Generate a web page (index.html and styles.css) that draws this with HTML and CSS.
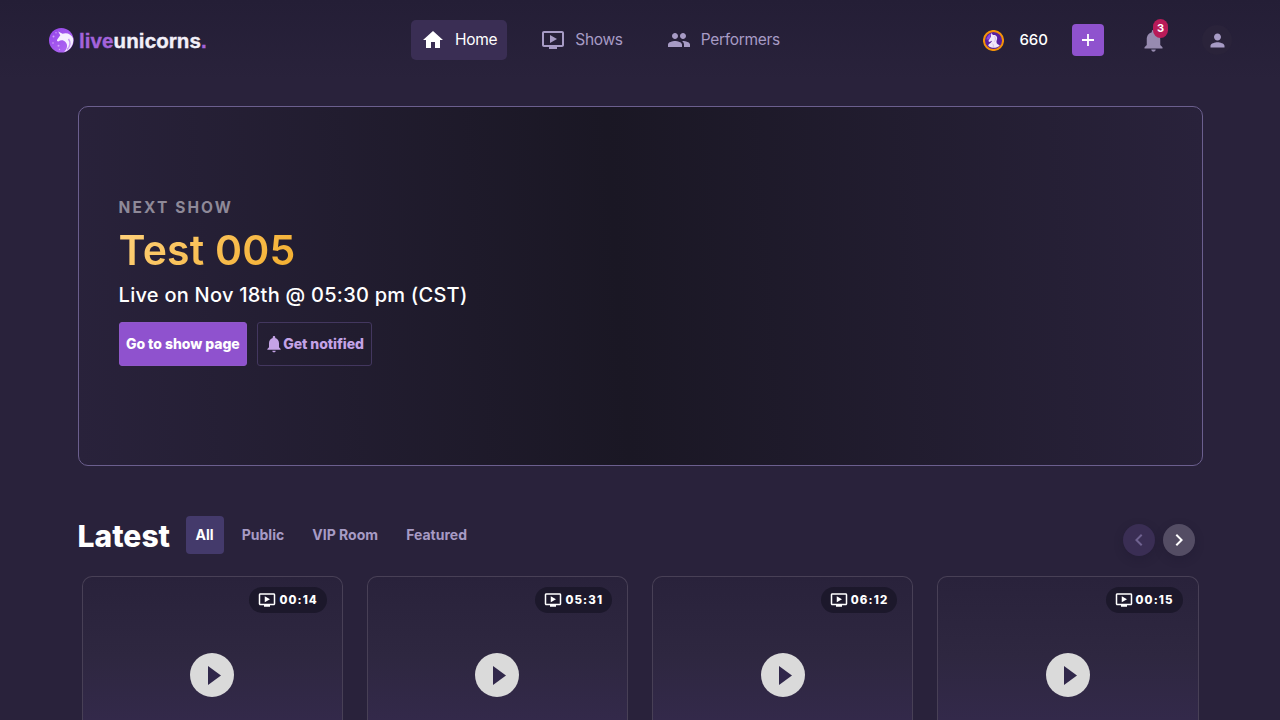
FILE: index.html
```html
<!DOCTYPE html>
<html lang="en">
<head>
<meta charset="utf-8">
<title>liveunicorns.</title>
<link rel="stylesheet" href="styles.css">
</head>
<body>
<svg class="defs" width="0" height="0" aria-hidden="true">
  <symbol id="tv" viewBox="0 0 24 24"><path d="M21 3H3c-1.11 0-2 .89-2 2v12c0 1.1.89 2 2 2h5v2h8v-2h5c1.1 0 2-.9 2-2V5c0-1.11-.9-2-2-2zm0 14H3V5h18v12zM9 7v8l7-4z"/></symbol>
  <symbol id="bell" viewBox="0 0 24 24"><path d="M12 22c1.1 0 2-.9 2-2h-4c0 1.1.9 2 2 2zm6-6v-5c0-3.070-1.640-5.640-4.500-6.320V4c0-.83-.67-1.500-1.500-1.500s-1.500.67-1.500 1.500v.680C7.630 5.360 6 7.920 6 11v5l-2 2v1h16v-1l-2-2z"/></symbol>
</svg>
<header class="header">
  <a class="logo">
    <svg class="logo-mark" viewBox="0 0 26 26">
      <defs><linearGradient id="lg" x1="0" y1="0" x2="1" y2="1"><stop offset="0" stop-color="#9344e8"/><stop offset="1" stop-color="#b46cf5"/></linearGradient></defs>
      <circle cx="13.300" cy="13.200" r="12.300" fill="url(#lg)"/>
      <path d="M10.200 4.500L14.500 6.800C19 5.200 23.500 7.500 25.200 11.500C26 17.500 22 23.500 16 25C19.500 21.500 20 18 17.500 15C15.300 12.800 13 12.700 10.300 14.500C9.200 14.500 8.700 13.700 9.100 12.800L12.300 8.300Z" fill="#f6efff"/>
      <path d="M20.500 12c2.500 3.500 1.500 7.500-1.500 10.500" fill="none" stroke="#c995f8" stroke-width="1.400"/>
      <g fill="#d2a2fa"><circle cx="5.500" cy="9.500" r="1"/><circle cx="5" cy="16" r=".8"/><circle cx="10.500" cy="18.700" r="1"/><circle cx="8" cy="5.800" r=".7"/><circle cx="11.500" cy="22.500" r=".7"/></g>
    </svg>
    <span class="logo-text"><span class="accent">live</span>unicorns<span class="accent">.</span></span>
  </a>
  <nav class="nav">
    <a class="nav-item active"><svg viewBox="0 0 24 24"><path d="M10 20v-6h4v6h5v-8h3L12 3 2 12h3v8z"/></svg><span>Home</span></a>
    <a class="nav-item"><svg><use href="#tv"/></svg><span>Shows</span></a>
    <a class="nav-item"><svg viewBox="0 0 24 24"><path d="M16 11c1.660 0 2.990-1.340 2.990-3S17.660 5 16 5s-3 1.340-3 3 1.340 3 3 3zm-8 0c1.660 0 2.990-1.340 2.990-3S9.660 5 8 5 5 6.340 5 8s1.340 3 3 3zm0 2c-2.330 0-7 1.170-7 3.500V19h14v-2.500c0-2.330-4.670-3.500-7-3.500zm8 0c-.29 0-.62.020-.97.050 1.160.84 1.970 1.970 1.970 3.450V19h6v-2.500c0-2.330-4.670-3.500-7-3.500z"/></svg><span>Performers</span></a>
  </nav>
  <div class="tools">
    <svg class="coin" viewBox="0 0 20 20"><circle cx="10" cy="10" r="9.100" fill="#57209f" stroke="#f49208" stroke-width="1.900"/><path d="M3.200 9Q4 4.500 8 3.300L6 9Z" fill="#8b48df"/><path d="M7.800 2.800l1.700 2C13 4.300 14.300 7 13 10c-.8 2 .5 4 3 4.500C13.500 17.500 8 18 5 15c.2-2 3.300-2.800 3.600-4.700l-2.600 1.200-.9-1 2.400-4z" fill="#f1e7fa"/><path d="M9 13c1.300 1 1 3 .2 4M11 6c1.500 2 .5 4 0 5" stroke="#c5afd9" fill="none" stroke-width=".7"/></svg>
    <span class="balance">660</span>
    <a class="plus"><svg viewBox="0 0 14 14"><path d="M7 1v12M1 7h12"/></svg></a>
    <a class="alerts"><svg><use href="#bell"/></svg><span class="badge">3</span></a>
    <a class="user"><svg viewBox="0 0 24 24"><path d="M12 12c2.210 0 4-1.790 4-4s-1.790-4-4-4-4 1.790-4 4 1.790 4 4 4zm0 2c-2.670 0-8 1.340-8 4v2h16v-2c0-2.660-5.330-4-8-4z"/></svg></a>
  </div>
</header>
<main>
  <section class="hero">
    <p class="eyebrow">NEXT SHOW</p>
    <h1>Test 005</h1>
    <p class="when">Live on Nov 18th @ 05:30 pm (CST)</p>
    <div class="actions">
      <a class="btn primary">Go to show page</a>
      <a class="btn outline"><svg><use href="#bell"/></svg>Get notified</a>
    </div>
  </section>
  <section class="latest">
    <div class="latest-head">
      <h2>Latest</h2>
      <div class="tabs"><a class="tab on">All</a><a class="tab">Public</a><a class="tab">VIP Room</a><a class="tab">Featured</a></div>
      <div class="arrows">
        <a class="arrow off"><svg viewBox="0 0 24 24"><path d="M15.410 7.410L14 6l-6 6 6 6 1.410-1.410L10.830 12z"/></svg></a>
        <a class="arrow"><svg viewBox="0 0 24 24"><path d="M10 6L8.590 7.410 13.170 12l-4.580 4.590L10 18l6-6z"/></svg></a>
      </div>
    </div>
    <div class="cards">
      <article class="card"><span class="time"><svg><use href="#tv"/></svg>00:14</span><span class="play"><svg viewBox="0 0 44 44"><path d="M18 13v19l13-9.500z"/></svg></span></article>
      <article class="card"><span class="time"><svg><use href="#tv"/></svg>05:31</span><span class="play"><svg viewBox="0 0 44 44"><path d="M18 13v19l13-9.500z"/></svg></span></article>
      <article class="card"><span class="time"><svg><use href="#tv"/></svg>06:12</span><span class="play"><svg viewBox="0 0 44 44"><path d="M18 13v19l13-9.500z"/></svg></span></article>
      <article class="card"><span class="time"><svg><use href="#tv"/></svg>00:15</span><span class="play"><svg viewBox="0 0 44 44"><path d="M18 13v19l13-9.500z"/></svg></span></article>
    </div>
  </section>
</main>
</body>
</html>
```
FILE: styles.css
```css
* { box-sizing: border-box; }
body { margin: 0; background: #29223b; color: #fff; font-family: Inter, "Liberation Sans", sans-serif; }
h1, h2, p { margin: 0; }
svg { display: block; fill: currentColor; flex: none; }
.defs { display: none; }
.header { height: 80px; padding: 0 48px 0 48px; display: grid; grid-template-columns: 363px 1fr auto; align-items: center; background: linear-gradient(#241e36, #29223b); }
.logo { display: flex; align-items: center; gap: 5px; }
.logo-mark { width: 26px; height: 26px; }
.logo-text { font: bold 20.500px/26px "Liberation Sans", sans-serif; letter-spacing: .1px; color: #f2eff8; padding-top: 1px; -webkit-text-stroke: .4px currentColor; }
.accent { color: #a363da; }
.nav { display: flex; align-items: center; gap: 24px; }
.nav-item { display: flex; align-items: center; gap: 10px; height: 40px; padding: 0 10px; border-radius: 5px; font-size: 15.500px; letter-spacing: -.3px; color: #a79bc5; }
.nav-item span { padding-bottom: 1px; }
.nav-item svg { width: 24px; height: 24px; }
.nav-item.active { background: #3a2e54; color: #fff; }
.tools { display: flex; align-items: center; }
.coin { width: 21px; height: 21px; }
.balance { margin-left: 15px; font-size: 15px; font-weight: 500; padding-bottom: 1px; }
.plus { margin-left: 24px; width: 32px; height: 32px; border-radius: 4px; background: #8f52ce; display: grid; place-items: center; }
.plus svg { width: 14px; height: 14px; stroke: #fff; stroke-width: 1.800; }
.alerts { margin-left: 36px; position: relative; color: #978bb0; }
.alerts svg { width: 27px; height: 27px; }
.badge { position: absolute; left: 13px; top: -8px; width: 15px; height: 19px; border-radius: 8px; background: #b81b58; color: #fff; font-size: 11px; font-weight: 700; line-height: 19px; text-align: center; }
.user { margin-left: 35px; width: 30px; height: 30px; border-radius: 50%; background: #2a233a; color: #a79bc5; display: grid; place-items: center; }
.user svg { width: 21px; height: 21px; }
main { padding: 26px 77.400px 0 77.600px; }
.hero { height: 360px; padding: 92px 40px 0; border: 1px solid #6b5f8e; border-radius: 10px; background: linear-gradient(86deg, #29223b 0%, #1a1724 48%, #29223b 100%); }
.eyebrow { font-size: 15.500px; line-height: 18px; font-weight: 700; letter-spacing: 2.100px; color: #8e8998; }
h1 { width: max-content; margin-top: 8px; font-size: 41px; line-height: 50px; font-weight: 600; letter-spacing: .2px; background: linear-gradient(135deg, #ffd27d, #f3ad2c); -webkit-background-clip: text; background-clip: text; color: transparent; }
.when { margin-top: 7px; font-size: 20px; line-height: 26px; font-weight: 500; letter-spacing: .25px; }
.actions { display: flex; gap: 9.500px; margin-top: 14px; }
.btn { height: 44px; padding-bottom: 1px; border: 1px solid #43375f; border-radius: 3px; display: flex; align-items: center; justify-content: center; font-size: 14px; font-weight: 800; letter-spacing: -.05px; }
.primary { width: 128.500px; background: #8f52ce; border-color: #9058ca; }
.outline { width: 115px; color: #c4a3e6; }
.outline svg { width: 20px; height: 20px; margin-right: -1px; }
.latest { padding-top: 50px; }
.latest-head { display: flex; height: 38px; }
h2 { font-size: 30px; line-height: 40px; font-weight: 800; }
.tabs { display: flex; gap: 8px; margin-left: 15.500px; }
.tab { height: 38px; padding: 0 10px; border-radius: 4px; font-size: 14px; line-height: 38px; font-weight: 700; letter-spacing: .02px; color: #a79bc5; }
.tab.on { background: #443a6b; color: #fff; }
.arrows { display: flex; gap: 8px; margin: 8px 8px 0 auto; }
.arrow { width: 32px; height: 32px; border-radius: 50%; background: #544d64; display: grid; place-items: center; box-shadow: 0 3px 8px rgba(30, 24, 46, .35); }
.arrow.off { background: #3a2e54; color: #6f6290; }
.arrow svg { width: 24px; height: 24px; }
.cards { display: grid; grid-template-columns: repeat(4, 1fr); gap: 24px; padding: 22px 4px 0; }
.card { height: 144px; padding: 10px 15px 0; border: 1px solid #484056; border-bottom: 0; border-radius: 10px 10px 0 0; background: linear-gradient(#29223b 0%, #2e2740 55%, #33294a 100%); display: flex; flex-direction: column; align-items: center; }
.time { align-self: flex-end; display: flex; align-items: center; gap: 3px; height: 26px; padding: 0 9px 1px; border-radius: 13px; background: #1c182b; font-size: 11.500px; font-weight: 800; letter-spacing: 1.100px; }
.time svg { width: 18px; height: 18px; }
.play { margin-top: 40px; width: 44px; height: 44px; border-radius: 50%; background: #dadada; color: #30274a; }
```
